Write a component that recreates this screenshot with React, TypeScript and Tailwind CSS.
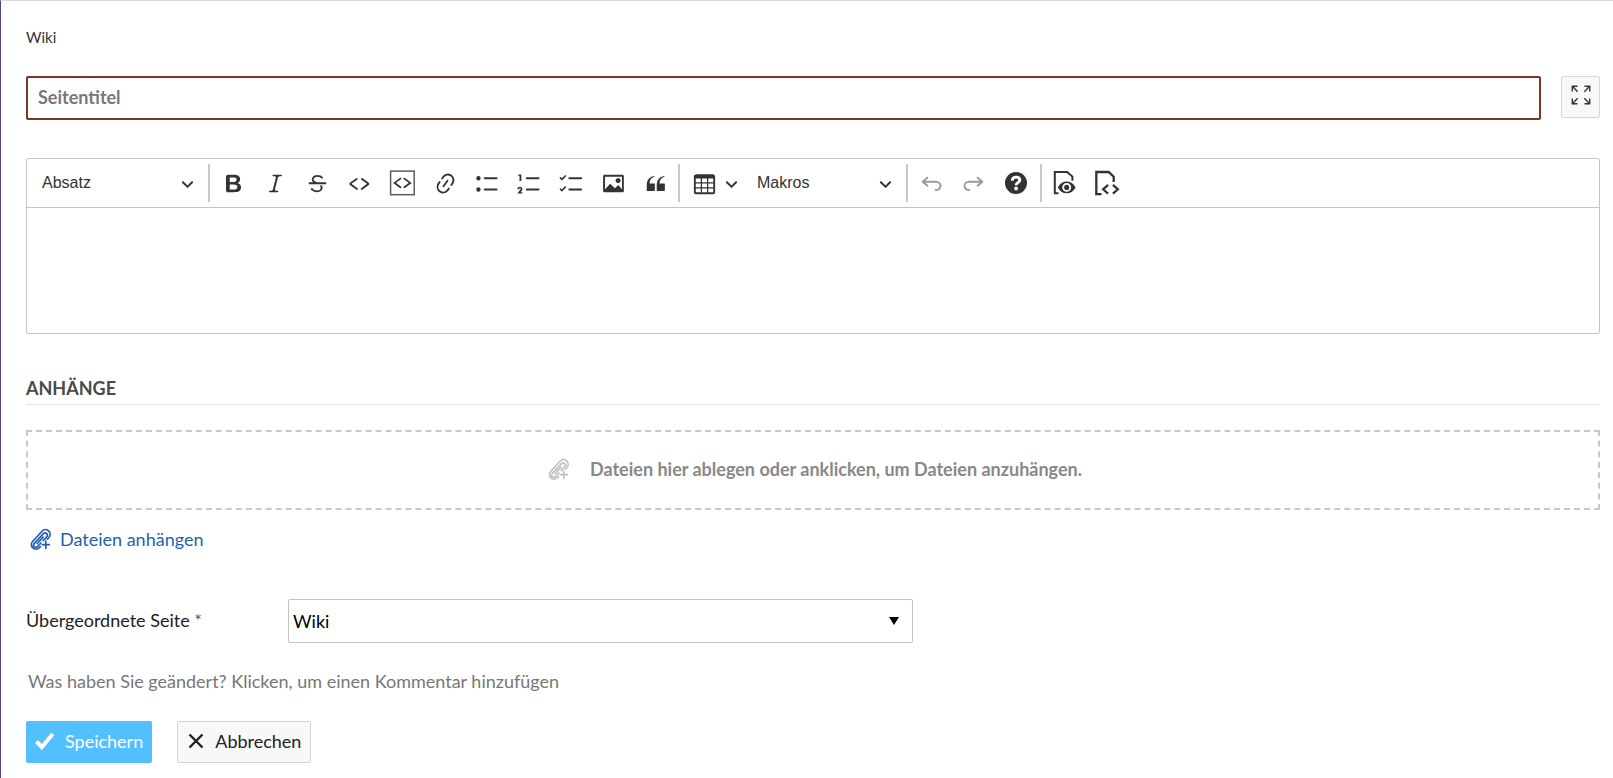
import type { ReactNode } from "react";

const icons = {
  bold: "M10.187 17H5.773c-.637 0-1.092-.138-1.364-.415-.273-.277-.409-.718-.409-1.323V4.738c0-.617.14-1.062.419-1.332.279-.27.73-.406 1.354-.406h4.68c.69 0 1.288.041 1.793.124.506.083.96.242 1.36.478.341.197.644.447.906.75a3.262 3.262 0 0 1 .808 2.162c0 1.401-.722 2.426-2.167 3.075C15.05 10.175 16 11.315 16 13.01a3.756 3.756 0 0 1-2.296 3.504 6.1 6.1 0 0 1-1.517.377c-.571.073-1.238.11-2 .11zm-.217-6.217H7v4.087h3.069c1.977 0 2.965-.69 2.965-2.072 0-.707-.256-1.22-.768-1.537-.512-.319-1.277-.478-2.296-.478zM7 5.13v3.619h2.606c.729 0 1.292-.067 1.69-.2a1.6 1.6 0 0 0 .91-.765c.165-.267.247-.566.247-.897 0-.707-.26-1.176-.778-1.409-.519-.232-1.31-.348-2.375-.348H7z",
  italic:
    "m9.586 14.633.021.004c-.036.335.095.655.393.962.082.083.173.15.274.201h1.474a.6.6 0 1 1 0 1.2H5.304a.6.6 0 0 1 0-1.2h1.15c.474-.07.809-.182 1.005-.334.157-.122.291-.32.404-.597l2.416-9.55a1.053 1.053 0 0 0-.281-.823 1.12 1.12 0 0 0-.442-.296H8.15a.6.6 0 0 1 0-1.2h6.443a.6.6 0 1 1 0 1.2h-1.195c-.376.056-.65.155-.823.296-.215.175-.423.439-.623.79l-2.366 9.347z",
  strike:
    "M7 16.4c-.8-.4-1.5-.9-2.2-1.5a.6.6 0 0 1-.2-.5l.3-.6h1c1 1.2 2.1 1.7 3.7 1.7 1 0 1.8-.3 2.3-.6.6-.4.6-1.2.6-1.3.2-1.2-.9-2.1-.9-2.1h2.1c.3.7.4 1.2.4 1.7v.8l-.6 1.2c-.6.8-1.1 1-1.6 1.2a6 6 0 0 1-2.4.6c-1 0-1.8-.3-2.5-.6zM6.8 9 6 8.3c-.4-.5-.5-.8-.5-1.6 0-.7.1-1.3.5-1.8.4-.6 1-1 1.6-1.3a6.3 6.3 0 0 1 4.7 0 4 4 0 0 1 1.7 1l.3.7c0 .1.2.4-.2.7-.4.2-.9.1-1 0a3 3 0 0 0-1.2-1c-.4-.2-1-.3-2-.4-.7 0-1.4.2-2 .6-.8.6-1 .8-1 1.5 0 .8.5 1 1.2 1.5.6.4 1.1.7 1.9 1H6.8zM3 10.5V9h14v1.5z",
  code: "m12.5 5.7 5.2 3.9v1.3l-5.6 4c-.1.2-.3.2-.5.2-.3-.1-.6-.7-.6-1l.3-.4 4.7-3.5L11.5 7l-.2-.2c-.1-.3-.1-.6 0-.8.2-.2.5-.4.8-.4a.8.8 0 0 1 .4.1zm-5.2 0L2 9.6v1.3l5.6 4c.1.2.3.2.5.2.3-.1.7-.7.6-1 0-.1 0-.3-.2-.4l-5-3.5L8.2 7l.2-.2c.1-.3.1-.6 0-.8-.2-.2-.5-.4-.8-.4a.8.8 0 0 0-.3.1z",
  link: "m11.077 15 .991-1.416a.75.75 0 1 1 1.229.86l-1.148 1.64a.748.748 0 0 1-.217.206 5.251 5.251 0 0 1-8.503-5.955.741.741 0 0 1 .12-.274l1.147-1.639a.75.75 0 1 1 1.228.86L4.933 10.7l.006.003a3.75 3.75 0 0 0 6.132 4.294l.006.004zm5.494-5.335a.748.748 0 0 1-.12.274l-1.147 1.639a.75.75 0 1 1-1.228-.86l.86-1.23a3.75 3.75 0 0 0-6.144-4.301l-.86 1.229a.75.75 0 0 1-1.229-.86l1.148-1.64a.748.748 0 0 1 .217-.206 5.251 5.251 0 0 1 8.503 5.955zm-4.563-2.532a.75.75 0 0 1 .184 1.045l-3.155 4.505a.75.75 0 1 1-1.229-.86l3.155-4.506a.75.75 0 0 1 1.045-.184z",
  bulleted:
    "M7 5.75c0 .414.336.75.75.75h9.5a.75.75 0 1 0 0-1.5h-9.5a.75.75 0 0 0-.75.75zm-6 0a1.75 1.75 0 1 1 3.5 0 1.75 1.75 0 0 1-3.5 0zm6 9c0 .414.336.75.75.75h9.5a.75.75 0 1 0 0-1.5h-9.5a.75.75 0 0 0-.75.75zm-6 0a1.75 1.75 0 1 1 3.5 0 1.75 1.75 0 0 1-3.5 0z",
  numbered:
    "M7 5.75c0 .414.336.75.75.75h9.5a.75.75 0 1 0 0-1.5h-9.5a.75.75 0 0 0-.75.75zM3.5 3v5H2V3.7H1v-1h2.5V3zM.343 17.857l2.59-3.257H2.92a.6.6 0 1 0-1.04 0H.302a2 2 0 1 1 3.995 0h-.001c-.048.405-.16.734-.333.988-.175.254-.59.692-1.244 1.312H4.3v1h-4l.043-.043zM7 14.75a.75.75 0 0 1 .75-.75h9.5a.75.75 0 1 1 0 1.5h-9.5a.75.75 0 0 1-.75-.75z",
  todo: "m2.315 14.705 2.224-2.24a.689.689 0 0 1 .963 0 .664.664 0 0 1 0 .949L2.865 16.07a.682.682 0 0 1-.112.089.647.647 0 0 1-.852-.051L.688 14.886a.635.635 0 0 1 0-.903.647.647 0 0 1 .91 0l.717.722zm5.185.045a.75.75 0 0 1 .75-.75h9.5a.75.75 0 1 1 0 1.5h-9.5a.75.75 0 0 1-.75-.75zM2.329 5.745l2.21-2.226a.689.689 0 0 1 .963 0 .664.664 0 0 1 0 .95L2.865 7.125a.685.685 0 0 1-.496.196.644.644 0 0 1-.468-.187L.688 5.912a.635.635 0 0 1 0-.903.647.647 0 0 1 .91 0l.73.736zM7.5 5.75A.75.75 0 0 1 8.25 5h9.5a.75.75 0 1 1 0 1.5h-9.5a.75.75 0 0 1-.75-.75z",
  image:
    "M6.91 10.54c.26-.23.64-.21.88.03l3.36 3.14 2.23-2.06a.64.64 0 0 1 .87 0l2.52 2.97V4.5H3.2v10.12l3.71-4.08zm10.27-7.51c.6 0 1.09.47 1.09 1.05v11.84c0 .59-.49 1.06-1.09 1.06H2.79c-.6 0-1.09-.47-1.09-1.06V4.08c0-.58.49-1.05 1.1-1.05h14.38zm-5.22 5.56a1.96 1.96 0 1 1 3.4-1.96 1.96 1.96 0 0 1-3.4 1.96z",
  quote:
    "M3 10.423a6.5 6.5 0 0 1 6.056-6.408l.038.67C6.448 5.423 5.354 7.663 5.22 10H9c.552 0 .5.432.5.986v4.511c0 .554-.448.503-1 .503h-5c-.552 0-.5-.449-.5-1.003v-4.574zm8 0a6.5 6.5 0 0 1 6.056-6.408l.038.67c-2.646.739-3.74 2.979-3.873 5.315H17c.552 0 .5.432.5.986v4.511c0 .554-.448.503-1 .503h-5c-.552 0-.5-.449-.5-1.003v-4.574z",
  table:
    "M3 6v3h4V6H3zm0 4v3h4v-3H3zm0 4v3h4v-3H3zm5 3h4v-3H8v3zm5 0h4v-3h-4v3zm4-4v-3h-4v3h4zm0-4V6h-4v3h4zm1.5 8a1.5 1.5 0 0 1-1.5 1.5H3A1.5 1.5 0 0 1 1.5 17V4c.222-.863 1.068-1.5 2-1.5h13c.932 0 1.778.637 2 1.5v13zM12 13v-3H8v3h4zm0-4V6H8v3h4z",
  undo: "m5.042 9.367 2.189 1.837a.75.75 0 0 1-.965 1.149l-3.788-3.18a.747.747 0 0 1-.21-.284.75.75 0 0 1 .17-.945L6.23 4.762a.75.75 0 1 1 .964 1.15L4.863 7.866h8.917A.75.75 0 0 1 14 7.9a4 4 0 1 1-1.477 7.718l.344-1.489a2.5 2.5 0 1 0 1.094-4.73l.008-.032H5.042z",
  redo: "m14.958 9.367-2.189 1.837a.75.75 0 0 0 .965 1.149l3.788-3.18a.747.747 0 0 0 .21-.284.75.75 0 0 0-.17-.945L13.77 4.762a.75.75 0 1 0-.964 1.15l2.331 1.955H6.22A.75.75 0 0 0 6 7.9a4 4 0 1 0 1.477 7.718l-.344-1.489A2.5 2.5 0 1 1 6.039 9.4l-.008-.032h8.927z",
};

function Icon({ d }: { d: string }) {
  return (
    <svg viewBox="0 0 20 20" className="w-[25px] h-[25px] shrink-0 fill-current">
      <path d={d} />
    </svg>
  );
}

function Chevron() {
  return (
    <svg viewBox="0 0 10 10" className="w-[13px] h-[13px] shrink-0 fill-current">
      <path d="M.941 4.523a.75.75 0 1 1 1.06-1.06l3.006 3.005 3.005-3.005a.75.75 0 1 1 1.06 1.06l-3.549 3.55a.75.75 0 0 1-1.168-.136L.941 4.523z" />
    </svg>
  );
}

function CodeBlockIcon() {
  return (
    <svg viewBox="0 0 28 28" className="w-7 h-7 shrink-0" fill="none" stroke="currentColor">
      <rect x="2.6" y="2.1" width="23.6" height="23.6" strokeWidth="1.5" stroke="#5c5c5c" />
      <path d="m12.400 9.600-5.800 4.300 5.800 4.300M16.400 9.600l5.800 4.300-5.800 4.300" strokeWidth="1.800" strokeLinecap="round" />
    </svg>
  );
}

function HelpIcon() {
  return (
    <svg viewBox="0 0 28 28" className="w-7 h-7 shrink-0">
      <circle cx="14" cy="14" r="11" fill="currentColor" />
      <path
        d="M10.2 11.6c.2-2.300 1.700-3.500 3.800-3.500 2.200 0 3.800 1.200 3.800 3 0 2.600-3.700 2.500-3.700 5.100"
        fill="none"
        stroke="#fff"
        strokeWidth="2.900"
      />
      <circle cx="14.100" cy="19.500" r="1.900" fill="#fff" />
    </svg>
  );
}

function PreviewIcon() {
  return (
    <svg viewBox="0 0 28 28" className="w-7 h-7 shrink-0" fill="none" stroke="currentColor">
      <path d="M7.500 24.300H3.800V2.900h12.400l5.200 4.700v4.200" strokeWidth="2" />
      <path
        d="M6.800 18.400c2.200-3.900 5.100-5.900 8.900-5.900s6.700 2 8.900 5.900c-2.200 3.900-5.100 5.900-8.900 5.900s-6.700-2-8.900-5.900z"
        fill="currentColor"
        stroke="none"
      />
      <circle cx="15.700" cy="18.400" r="3.500" stroke="#fff" strokeWidth="1.900" />
    </svg>
  );
}

function SourceIcon() {
  return (
    <svg viewBox="0 0 28 28" className="w-7 h-7 shrink-0" fill="none" stroke="currentColor">
      <path d="M8.500 25.100H3.300V3h12.300l5.100 4.700v5.200" strokeWidth="2.300" />
      <path d="m15.100 15.900-5 4.400 5 4.400M19.900 15.900l5 4.400-5 4.400" strokeWidth="2.200" />
    </svg>
  );
}

function AttachIcon() {
  return (
    <svg
      viewBox="0 0 22 22"
      className="w-[22px] h-[22px] shrink-0"
      fill="none"
      stroke="currentColor"
      strokeWidth="1.700"
      strokeLinecap="round"
      strokeLinejoin="round"
    >
      <path d="m10.400 18.700-1.200 1.100c-1.900 1.700-4.700 1.600-6.400 0-1.800-1.700-1.900-4.500-.2-6.300L12 3.200c1.800-1.900 4.700-2 6.600-.3 1.900 1.800 2 4.700.3 6.600l-1.500 1.600" />
      <path d="m10.900 15-3.500 3.600c-.9.900-2.300.9-3.200.1-.9-.9-.9-2.200-.1-3.100l9.400-9.900c.9-.9 2.300-.9 3.200-.1.900.9.900 2.200.1 3.100l-3.600 3.900" />
      <path d="m7.100 15.500 6-6.400M15.800 13.200v7M12.300 16.700h7" />
    </svg>
  );
}

function ToolButton({
  label,
  wide,
  disabled,
  children,
}: {
  label: string;
  wide?: boolean;
  disabled?: boolean;
  children: ReactNode;
}) {
  return (
    <button
      type="button"
      aria-label={label}
      disabled={disabled}
      className={`h-10 flex items-center justify-center shrink-0 disabled:text-[#999] ${
        wide ? "w-11" : "w-[42px]"
      }`}
    >
      {children}
    </button>
  );
}

function ToolSelect({ label, className }: { label: string; className: string }) {
  return (
    <div className={`relative h-10 shrink-0 ${className}`}>
      <select
        aria-label={label}
        className="appearance-none w-full h-full pl-[15px] bg-transparent text-base outline-none"
      >
        <option>{label}</option>
      </select>
      <span className="absolute right-3 top-3.5 pointer-events-none">
        <Chevron />
      </span>
    </div>
  );
}

function Separator() {
  return <span className="w-0.5 h-[38px] mx-0.5 shrink-0 bg-[#c9c9c9]" />;
}

const formatButtons = [
  { label: "Fett", icon: <Icon d={icons.bold} /> },
  { label: "Kursiv", icon: <Icon d={icons.italic} /> },
  { label: "Durchgestrichen", icon: <Icon d={icons.strike} /> },
  { label: "Code", icon: <Icon d={icons.code} /> },
  { label: "Codeblock", icon: <CodeBlockIcon />, wide: true },
  { label: "Link", icon: <Icon d={icons.link} /> },
  { label: "Aufzählungsliste", icon: <Icon d={icons.bulleted} /> },
  { label: "Nummerierte Liste", icon: <Icon d={icons.numbered} /> },
  { label: "Aufgabenliste", icon: <Icon d={icons.todo} /> },
  { label: "Bild einfügen", icon: <Icon d={icons.image} /> },
  { label: "Blockzitat", icon: <Icon d={icons.quote} /> },
];

function Toolbar() {
  return (
    <div className="flex items-center h-[49px] border-b border-[#c4c4c4] text-[#333] font-['Liberation_Sans',Arial,sans-serif]">
      <ToolSelect label="Absatz" className="w-[179px]" />
      <Separator />
      {formatButtons.map((button) => (
        <ToolButton key={button.label} label={button.label} wide={button.wide}>
          {button.icon}
        </ToolButton>
      ))}
      <Separator />
      <button
        type="button"
        aria-label="Tabelle einfügen"
        className="flex items-center gap-2 h-10 w-[60px] pl-2.5 shrink-0"
      >
        <Icon d={icons.table} />
        <Chevron />
      </button>
      <ToolSelect label="Makros" className="w-[162px]" />
      <Separator />
      <ToolButton label="Rückgängig" disabled>
        <Icon d={icons.undo} />
      </ToolButton>
      <ToolButton label="Wiederherstellen" disabled>
        <Icon d={icons.redo} />
      </ToolButton>
      <ToolButton label="Hilfe" wide>
        <HelpIcon />
      </ToolButton>
      <Separator />
      <ToolButton label="Vorschau">
        <PreviewIcon />
      </ToolButton>
      <ToolButton label="Quelltext">
        <SourceIcon />
      </ToolButton>
    </div>
  );
}

export default function App() {
  return (
    <main className="min-h-screen border-t border-t-[#dcdcdc] border-l border-l-[#5c3c8c] bg-white pl-[25px] pr-[13px] text-lg leading-6 text-[#222] font-[Lato,sans-serif]">
      <nav className="pt-6 text-[15px] leading-6 text-[#333]">
        <a href="#wiki">Wiki</a>
      </nav>

      <form onSubmit={(e) => e.preventDefault()}>
        {/* Title */}
        <div className="flex items-start gap-5 mt-[27px]">
          <input
            type="text"
            aria-label="Seitentitel"
            placeholder="Seitentitel"
            className="flex-1 min-w-0 h-11 px-2.5 pb-0.5 border-2 border-[#7b3527] rounded-xs font-bold outline-none placeholder:text-[#777]"
          />
          <button
            type="button"
            aria-label="Vollbild"
            className="flex justify-center pt-2 w-[39px] h-[42px] border border-[#d8d8d8] rounded-xs bg-[#f8f8f8]"
          >
            <svg viewBox="0 0 20 20" className="w-5 h-5" fill="none" stroke="#333" strokeWidth="1.400">
              <path d="M1.300 6.500V1.300h5.200M1.300 1.300l5.400 5.400M13.500 1.300h5.200v5.200M18.700 1.300l-5.400 5.400M1.300 13.500v5.200h5.200M1.300 18.700l5.400-5.400M18.700 13.500v5.200h-5.200M18.700 18.700l-5.400-5.400" />
            </svg>
          </button>
        </div>

        {/* Editor */}
        <div className="mt-[38px] border border-[#c4c4c4] rounded-xs">
          <Toolbar />
          <textarea aria-label="Seiteninhalt" className="block w-full h-[125px] p-4 resize-none outline-none" />
        </div>

        {/* Attachments */}
        <section>
          <h2 className="mt-[42px] pb-1 border-b border-[#e4e4e4] font-bold text-[#4a4a4a]">ANHÄNGE</h2>
          <button
            type="button"
            className="flex items-center justify-center gap-5 w-full h-20 mt-[25px] pl-1 pb-0.5 border-2 border-dashed border-[#c8c8c8] font-bold text-[#888]"
          >
            <span className="text-[#c0c0c0]">
              <AttachIcon />
            </span>
            Dateien hier ablegen oder anklicken, um Dateien anzuhängen.
          </button>
          <a href="#attach" className="inline-flex items-center gap-2 mt-[17px] pl-1 text-[#1f5fb0]">
            <AttachIcon />
            Dateien anhängen
          </a>
        </section>

        {/* Parent page */}
        <div className="flex items-center mt-11">
          <label htmlFor="parent-page" className="w-[262px] pb-0.5 shrink-0">
            Übergeordnete Seite <span className="text-[#555]">*</span>
          </label>
          <div className="relative w-[625px]">
            <select
              id="parent-page"
              className="appearance-none block w-full h-11 pl-1 border border-[#c4c4c4] rounded-xs bg-white text-black outline-none"
            >
              <option>Wiki</option>
            </select>
            <svg viewBox="0 0 10 8" className="absolute right-3.5 top-[18px] w-2.5 h-2 pointer-events-none">
              <path d="M0 0h10L5 8z" />
            </svg>
          </div>
        </div>

        <button type="button" className="block mt-[26px] ml-0.5 text-[#777]">
          Was haben Sie geändert? Klicken, um einen Kommentar hinzufügen
        </button>

        <div className="flex gap-[25px] mt-7">
          <button
            type="submit"
            className="flex items-center gap-2.5 h-[42px] px-[9px] pb-0.5 rounded-xs bg-[#52bfff] text-white"
          >
            <svg viewBox="0 0 20 18" className="w-5 h-[18px]" fill="none" stroke="currentColor" strokeWidth="4">
              <path d="m1.500 9.500 5.300 5.500L17.800 2" />
            </svg>
            Speichern
          </button>
          <button
            type="button"
            className="flex items-center gap-2.5 h-[42px] px-[9px] pb-0.5 border border-[#d4d4d4] rounded-xs bg-[#f8f8f8]"
          >
            <svg viewBox="0 0 18 18" className="w-[18px] h-[18px]" fill="none" stroke="#222" strokeWidth="2.400">
              <path d="M2.500 2.500l13 13M15.500 2.500l-13 13" />
            </svg>
            Abbrechen
          </button>
        </div>
      </form>
    </main>
  );
}
